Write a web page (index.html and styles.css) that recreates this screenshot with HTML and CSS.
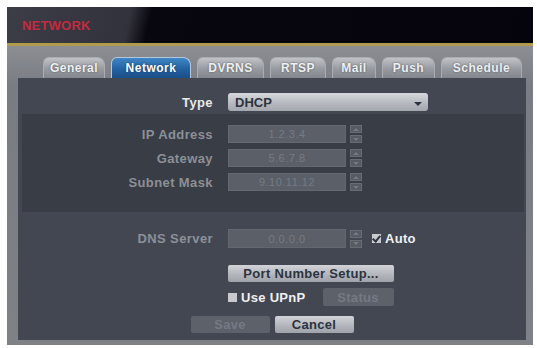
FILE: index.html
```html
<!DOCTYPE html>
<html>
<head>
  <title>Network</title>
  <link rel="stylesheet" href="styles.css">
</head>
<body>
  <div class="window">
    <div class="header">
      <span class="title">NETWORK</span>
    </div>

    <div class="frame">
      <div class="tabs">
        <div class="tab">General</div>
        <div class="tab active">Network</div>
        <div class="tab">DVRNS</div>
        <div class="tab">RTSP</div>
        <div class="tab">Mail</div>
        <div class="tab">Push</div>
        <div class="tab">Schedule</div>
      </div>

      <div class="panel">
        <div class="row type-row">
          <label class="label bright">Type</label>
          <div class="select">
            <span>DHCP</span>
            <span class="arrow"></span>
          </div>
        </div>

        <div class="inset">
          <div class="row">
            <label class="label">IP Address</label>
            <div class="field">1.2.3.4</div>
            <div class="spin"><span class="up"></span><span class="down"></span></div>
          </div>
          <div class="row">
            <label class="label">Gateway</label>
            <div class="field">5.6.7.8</div>
            <div class="spin"><span class="up"></span><span class="down"></span></div>
          </div>
          <div class="row">
            <label class="label">Subnet Mask</label>
            <div class="field">9.10.11.12</div>
            <div class="spin"><span class="up"></span><span class="down"></span></div>
          </div>
        </div>

        <div class="row dns-row">
          <label class="label">DNS Server</label>
          <div class="field">0.0.0.0</div>
          <div class="spin"><span class="up"></span><span class="down"></span></div>
          <span class="check checked"></span>
          <span class="check-text">Auto</span>
        </div>

        <div class="row indent port-row">
          <button class="btn port-btn">Port Number Setup...</button>
        </div>

        <div class="row indent upnp-row">
          <span class="check"></span>
          <span class="check-text">Use UPnP</span>
          <button class="btn disabled status-btn">Status</button>
        </div>

        <div class="actions">
          <button class="btn disabled">Save</button>
          <button class="btn">Cancel</button>
        </div>
      </div>
    </div>
  </div>
</body>
</html>
```

FILE: styles.css
```css
body {
  margin: 0;
  background-color: #ffffff;
  font-family: 'Liberation Sans', Arial, sans-serif;
}

.window {
  margin: 7px 0 0 7px;
  width: 526px;
  height: 338px;
  display: flex;
  flex-direction: column;
  background-color: #7c7e85;
}

.header {
  height: 36px;
  display: flex;
  align-items: center;
  padding-left: 15px;
  background: linear-gradient(103deg, #3d3d48 0, #32323c 122px, #08060f 142px, #05030c 100%);
  border-bottom: 3px solid #b09a4c;
}

.title {
  color: #c42a3e;
  font-size: 13px;
  font-weight: bold;
  letter-spacing: 0.2px;
}

.frame {
  flex: 1;
  display: flex;
  flex-direction: column;
  padding: 11px 7px 5px 11px;
  background: linear-gradient(#8c8e94, #7a7c83 40px, #7f8187);
}

.tabs {
  display: grid;
  grid-template-columns: 62px 80px 67px 56px 44px 53px 81px;
  column-gap: 6px;
  padding-left: 25px;
  height: 21px;
}

.tab {
  display: flex;
  align-items: center;
  justify-content: center;
  border-radius: 6px 8px 0 0;
  background: linear-gradient(#c0c2c7, #979aa0 55%, #83868d);
  border: 1px solid #a9acb1;
  border-bottom: none;
  color: #eef0f2;
  font-size: 12px;
  font-weight: bold;
  letter-spacing: 0.5px;
  text-shadow: 0 0 2px #4a4d55;
}

.tab.active {
  background: linear-gradient(#3f86c6, #225f9f 60%, #1b4f88);
  border: 1px solid #b4c8da;
  border-bottom: none;
  color: #ffffff;
  text-shadow: 0 0 2px #10345c;
}

.panel {
  flex: 1;
  display: flex;
  flex-direction: column;
  padding-top: 15px;
  background-color: #434751;
}

.row {
  display: flex;
  align-items: center;
  height: 18px;
}

.label {
  width: 210px;
  padding-right: 15px;
  box-sizing: border-box;
  text-align: right;
  color: #8c9098;
  font-size: 13px;
  font-weight: bold;
  letter-spacing: 0.4px;
}

.label.bright {
  color: #e8e9eb;
}

.select {
  width: 200px;
  height: 18px;
  display: flex;
  align-items: center;
  justify-content: space-between;
  padding: 0 6px 0 7px;
  box-sizing: border-box;
  border-radius: 3px;
  background: linear-gradient(#d6d8dc, #b7bac0 55%, #a3a7ae);
  color: #2c3340;
  font-size: 13px;
  font-weight: bold;
}

.arrow {
  width: 0;
  height: 0;
  border-left: 4px solid transparent;
  border-right: 4px solid transparent;
  border-top: 4px solid #2c3340;
  margin-top: 3px;
}

.inset {
  margin: 3px 2px 0 4px;
  padding: 11px 0 21px 0;
  display: flex;
  flex-direction: column;
  gap: 6px;
  background-color: #383d46;
}

.inset .label {
  width: 206px;
}

.field {
  width: 118px;
  height: 18px;
  display: flex;
  align-items: center;
  justify-content: center;
  box-sizing: border-box;
  border: 1px solid #626770;
  background-color: #5a5f68;
  color: #767b84;
  font-size: 11px;
  letter-spacing: 0.5px;
}

.spin {
  margin-left: 4px;
  width: 12px;
  height: 18px;
  display: flex;
  flex-direction: column;
  gap: 2px;
}

.spin span {
  flex: 1;
  display: flex;
  align-items: center;
  justify-content: center;
  box-sizing: border-box;
  border: 1px solid #676c75;
  background-color: #555a63;
}

.spin span::after {
  content: "";
  width: 0;
  height: 0;
  border-left: 3px solid transparent;
  border-right: 3px solid transparent;
}

.spin .up::after {
  border-bottom: 3px solid #747982;
}

.spin .down::after {
  border-top: 3px solid #747982;
}

.dns-row {
  margin-top: 17px;
  height: 19px;
}

.dns-row .field {
  height: 19px;
}

.check {
  width: 9px;
  height: 9px;
  background-color: #c9cacf;
  position: relative;
}

.dns-row .check {
  margin-left: 10px;
}

.check.checked::after {
  content: "";
  position: absolute;
  left: 2px;
  top: 0px;
  width: 3px;
  height: 6px;
  border-right: 2px solid #2d3440;
  border-bottom: 2px solid #2d3440;
  transform: rotate(40deg);
}

.check-text {
  margin-left: 4px;
  color: #f0f0f2;
  font-size: 13px;
  font-weight: bold;
  letter-spacing: 0.3px;
}

.indent {
  padding-left: 210px;
}

.btn {
  height: 17px;
  padding: 0;
  border: none;
  border-radius: 2px;
  background: linear-gradient(#d2d4d8, #b3b6bc 55%, #9fa3aa);
  color: #2c3340;
  font-family: 'Liberation Sans', Arial, sans-serif;
  font-size: 13px;
  font-weight: bold;
  letter-spacing: 0.3px;
}

.btn.disabled {
  background: #5c616a;
  color: #757a83;
}

.port-row {
  margin-top: 17px;
  height: 17px;
}

.port-btn {
  width: 166px;
}

.upnp-row {
  margin-top: 6px;
}

.status-btn {
  margin-left: 17px;
  width: 71px;
  height: 18px;
}

.actions {
  margin-top: 10px;
  display: flex;
  justify-content: center;
  gap: 5px;
}

.actions .btn {
  width: 79px;
}
```
